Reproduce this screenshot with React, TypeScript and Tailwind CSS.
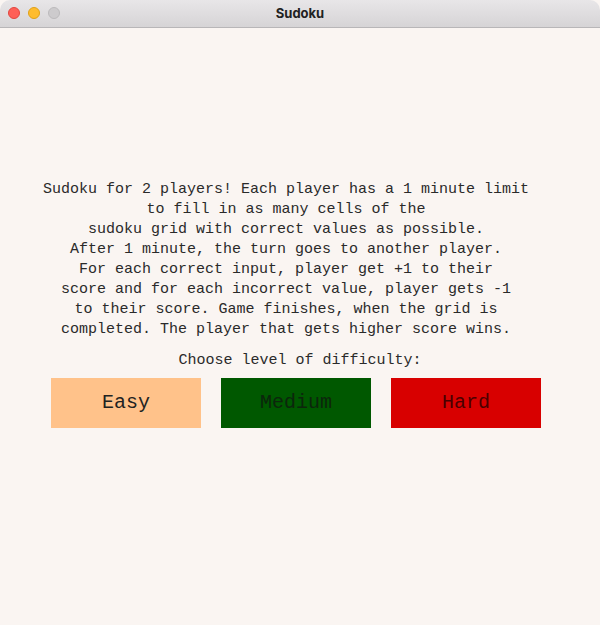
import React from "react";

export default function App() {
  const lines = [
    "Sudoku for 2 players! Each player has a 1 minute limit",
    "to fill in as many cells of the",
    "sudoku grid with correct values as possible.",
    "After 1 minute, the turn goes to another player.",
    "For each correct input, player get +1 to their",
    "score and for each incorrect value, player gets -1",
    "to their score. Game finishes, when the grid is",
    "completed. The player that gets higher score wins.",
  ];
  return (
    <div className="w-[600px] h-[625px] flex flex-col bg-[#faf5f2] overflow-hidden">
      <div className="relative h-[28px] flex items-center justify-center bg-gradient-to-b from-[#e8e6e8] to-[#d6d4d6] border-b border-[#b8b6b8] rounded-t-[10px]">
        <div className="absolute left-[8px] top-[7px] flex gap-[8px]">
          <div className="w-[12px] h-[12px] rounded-full bg-[#fe5f57] border border-[#e2463f]" />
          <div className="w-[12px] h-[12px] rounded-full bg-[#febc2e] border border-[#e1a116]" />
          <div className="w-[12px] h-[12px] rounded-full bg-[#cdcbcd] border border-[#bcbabc]" />
        </div>
        <span className="text-[13px] font-bold text-[#222] font-['Inter',sans-serif]">Sudoku</span>
      </div>
      <div className="flex-1 flex flex-col items-center pt-[152px] font-['Courier_New','Liberation_Mono',monospace] text-[#2a2a2a]">
        <div className="flex flex-col items-center text-[15px] leading-[20px] mr-[28px]">
          {lines.map((l) => (
            <div key={l} className="whitespace-pre">{l}</div>
          ))}
        </div>
        <div className="mt-[11px] text-[15px] leading-[20px]">Choose level of difficulty:</div>
        <div className="mt-[7px] flex gap-[20px] mr-[8px]">
          <button className="w-[150px] h-[50px] bg-[#ffc28a] text-[20px] text-[#222] font-['Courier_New','Liberation_Mono',monospace]">Easy</button>
          <button className="w-[150px] h-[50px] bg-[#005800] text-[20px] text-[#0c260c] font-['Courier_New','Liberation_Mono',monospace]">Medium</button>
          <button className="w-[150px] h-[50px] bg-[#d80000] text-[20px] text-[#4a0000] font-['Courier_New','Liberation_Mono',monospace]">Hard</button>
        </div>
      </div>
    </div>
  );
}
